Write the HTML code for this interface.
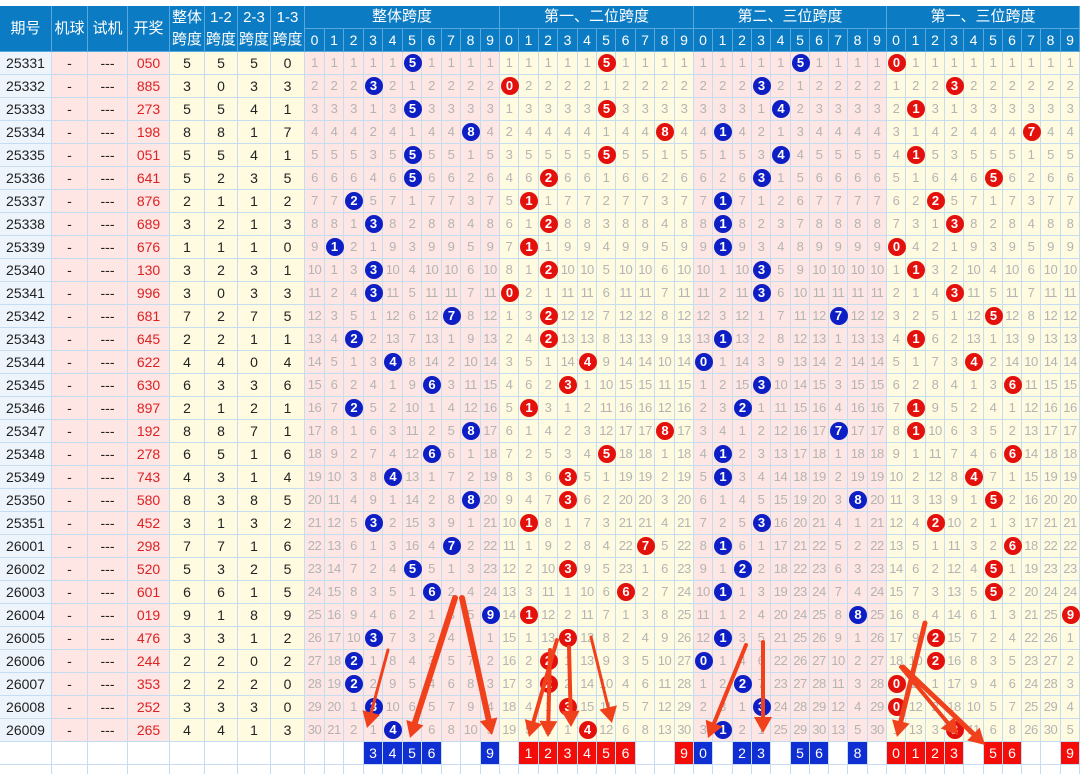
<!DOCTYPE html>
<html><head><meta charset="utf-8">
<style>
html,body{margin:0;padding:0;background:#fff;width:1080px;height:774px;overflow:hidden;position:relative;font-family:"Liberation Sans","Noto Sans CJK SC",sans-serif;}
.c{position:absolute;box-sizing:border-box;border-right:1px solid #c6dcf0;border-bottom:1px solid #c6dcf0;text-align:center;overflow:hidden;white-space:nowrap;}
.h{background:#0b7bc3;color:#fff;border-color:#5aa7dc;font-size:15px;}
.m{color:#b4b4b4;font-size:13px;letter-spacing:-0.5px;}
.b{position:absolute;width:18px;height:18px;border-radius:50%;color:#fff;font-weight:bold;font-size:13px;line-height:18px;text-align:center;}
.bx{position:absolute;color:#fff;font-size:14px;text-align:center;line-height:22px;}
svg{position:absolute;left:0;top:0;}
</style></head><body>
<div id="root"></div>
<svg width="1080" height="774" viewBox="0 0 1080 774" id="arr"></svg>
<script>
var rows=[
["25331","050",5,5,5,0],["25332","885",3,0,3,3],["25333","273",5,5,4,1],["25334","198",8,8,1,7],
["25335","051",5,5,4,1],["25336","641",5,2,3,5],["25337","876",2,1,1,2],["25338","689",3,2,1,3],
["25339","676",1,1,1,0],["25340","130",3,2,3,1],["25341","996",3,0,3,3],["25342","681",7,2,7,5],
["25343","645",2,2,1,1],["25344","622",4,4,0,4],["25345","630",6,3,3,6],["25346","897",2,1,2,1],
["25347","192",8,8,7,1],["25348","278",6,5,1,6],["25349","743",4,3,1,4],["25350","580",8,3,8,5],
["25351","452",3,1,3,2],["26001","298",7,7,1,6],["26002","520",5,3,2,5],["26003","601",6,6,1,5],
["26004","019",9,1,8,9],["26005","476",3,3,1,2],["26006","244",2,2,0,2],["26007","353",2,2,2,0],
["26008","252",3,3,3,0],["26009","265",4,4,1,3]];
var L=[0,52,88,128,170,205,238,271,305];
var G=[305,500,694,887,1080];
var h='';
function cell(x,y,w,hh,cls,st,t){h+='<div class="c '+cls+'" style="left:'+x+'px;top:'+y+'px;width:'+w+'px;height:'+hh+'px;'+st+'">'+t+'</div>';}
var top0=6,RH=23,Y0=52;
// header
var hd=['期号','机球','试机','开奖'];
for(var i=0;i<4;i++)cell(L[i],top0,L[i+1]-L[i],46,'h','line-height:46px;',hd[i]);
var hd2=['整体','1-2','2-3','1-3'];
for(var i=0;i<4;i++)cell(L[i+4],top0,L[i+5]-L[i+4],46,'h','line-height:22px;padding-top:1px;',hd2[i]+'<br>跨度');
var gt=['整体跨度','第一、二位跨度','第二、三位跨度','第一、三位跨度'];
function cx(g,d){return Math.round(G[g]+(G[g+1]-G[g])*d/10);}
for(var g=0;g<4;g++){
 cell(G[g],top0,G[g+1]-G[g],23,'h','line-height:22px;',gt[g]);
 for(var d=0;d<10;d++)cell(cx(g,d),29,cx(g,d+1)-cx(g,d),23,'h','line-height:22px;font-size:14px;',d);
}
var miss=[[1,1,1,1,1,1,1,1,1,1],[1,1,1,1,1,1,1,1,1,1],[1,1,1,1,1,1,1,1,1,1],[1,1,1,1,1,1,1,1,1,1]];
var balls='';
for(var r=0;r<30;r++){
 var R=rows[r],y=Y0+r*RH;
 cell(L[0],y,52,RH,'','background:#edf4fc;font-size:14px;line-height:22px;color:#222;',R[0]);
 cell(L[1],y,36,RH,'','background:#fde6e4;font-size:14px;line-height:22px;color:#222;','-');
 cell(L[2],y,40,RH,'','background:#fde6e4;font-size:14px;line-height:22px;color:#222;','---');
 cell(L[3],y,42,RH,'','background:#fde6e4;font-size:14px;line-height:22px;color:#d22;',R[1]);
 for(var k=0;k<4;k++)cell(L[4+k],y,L[5+k]-L[4+k],RH,'','background:#fefbe0;font-size:14px;line-height:22px;color:#222;',R[2+k]);
 for(var g=0;g<4;g++){
  var v=R[2+g];var bg=(g%2==0)?'#fde6e4':'#fefbe0';
  for(var d=0;d<10;d++){
   var x=cx(g,d),w=cx(g,d+1)-x;
   if(d==v){cell(x,y,w,RH,'','background:'+bg+';','');
     balls+='<div class="b" style="left:'+(x+w/2-9)+'px;top:'+(y+2)+'px;background:'+(g%2==0?'#0d1fc4':'#e4100c')+';">'+d+'</div>';
     miss[g][d]=1;}
   else{cell(x,y,w,RH,'m','background:'+bg+';line-height:22px;',miss[g][d]);miss[g][d]++;}
  }
 }
}
// summary rows
var sy=Y0+30*RH;
for(var k=0;k<2;k++){var yy=sy+k*RH;
 for(var i=0;i<8;i++)cell(L[i],yy,L[i+1]-L[i],RH,'','','');
 for(var g=0;g<4;g++)for(var d=0;d<10;d++)cell(cx(g,d),yy,cx(g,d+1)-cx(g,d),RH,'','','');}
var sm=[[3,4,5,6,9],[1,2,3,4,5,6,9],[0,2,3,5,6,8],[0,1,2,3,5,6,9]];
for(var g=0;g<4;g++)sm[g].forEach(function(d){var x=cx(g,d),w=cx(g,d+1)-x;
 balls+='<div class="bx" style="left:'+x+'px;top:'+sy+'px;width:'+(w-1)+'px;height:22px;background:'+(g%2==0?'#0f2fd2':'#f40c08')+';">'+d+'</div>';});
document.getElementById('root').innerHTML=h+balls;
// arrows
var A=[[388,650,367,728,3],[455,598,410,738,6],[462,598,492,735,6],
[557,640,529,737,4],[550,650,548,737,4],[569,647,571,727,4],[591,637,612,723,3],
[746,645,708,738,4],[763,642,763,733,4],
[925,623,897,737,5],[901,667,958,735,4],[903,667,985,745,5]];
var s='';
A.forEach(function(a){var x1=a[0],y1=a[1],x2=a[2],y2=a[3],w=a[4];
 var dx=x2-x1,dy=y2-y1,l=Math.sqrt(dx*dx+dy*dy),ux=dx/l,uy=dy/l,hl=16,hw=9;
 var bx=x2-ux*hl,by=y2-uy*hl;
 s+='<line x1="'+x1+'" y1="'+y1+'" x2="'+bx+'" y2="'+by+'" stroke="#f0401c" stroke-width="'+w+'" stroke-linecap="round"/>';
 s+='<polygon fill="#f0401c" points="'+x2+','+y2+' '+(bx-uy*hw)+','+(by+ux*hw)+' '+(bx+uy*hw)+','+(by-ux*hw)+'"/>';});
document.getElementById('arr').innerHTML=s;
</script>
</body></html>
